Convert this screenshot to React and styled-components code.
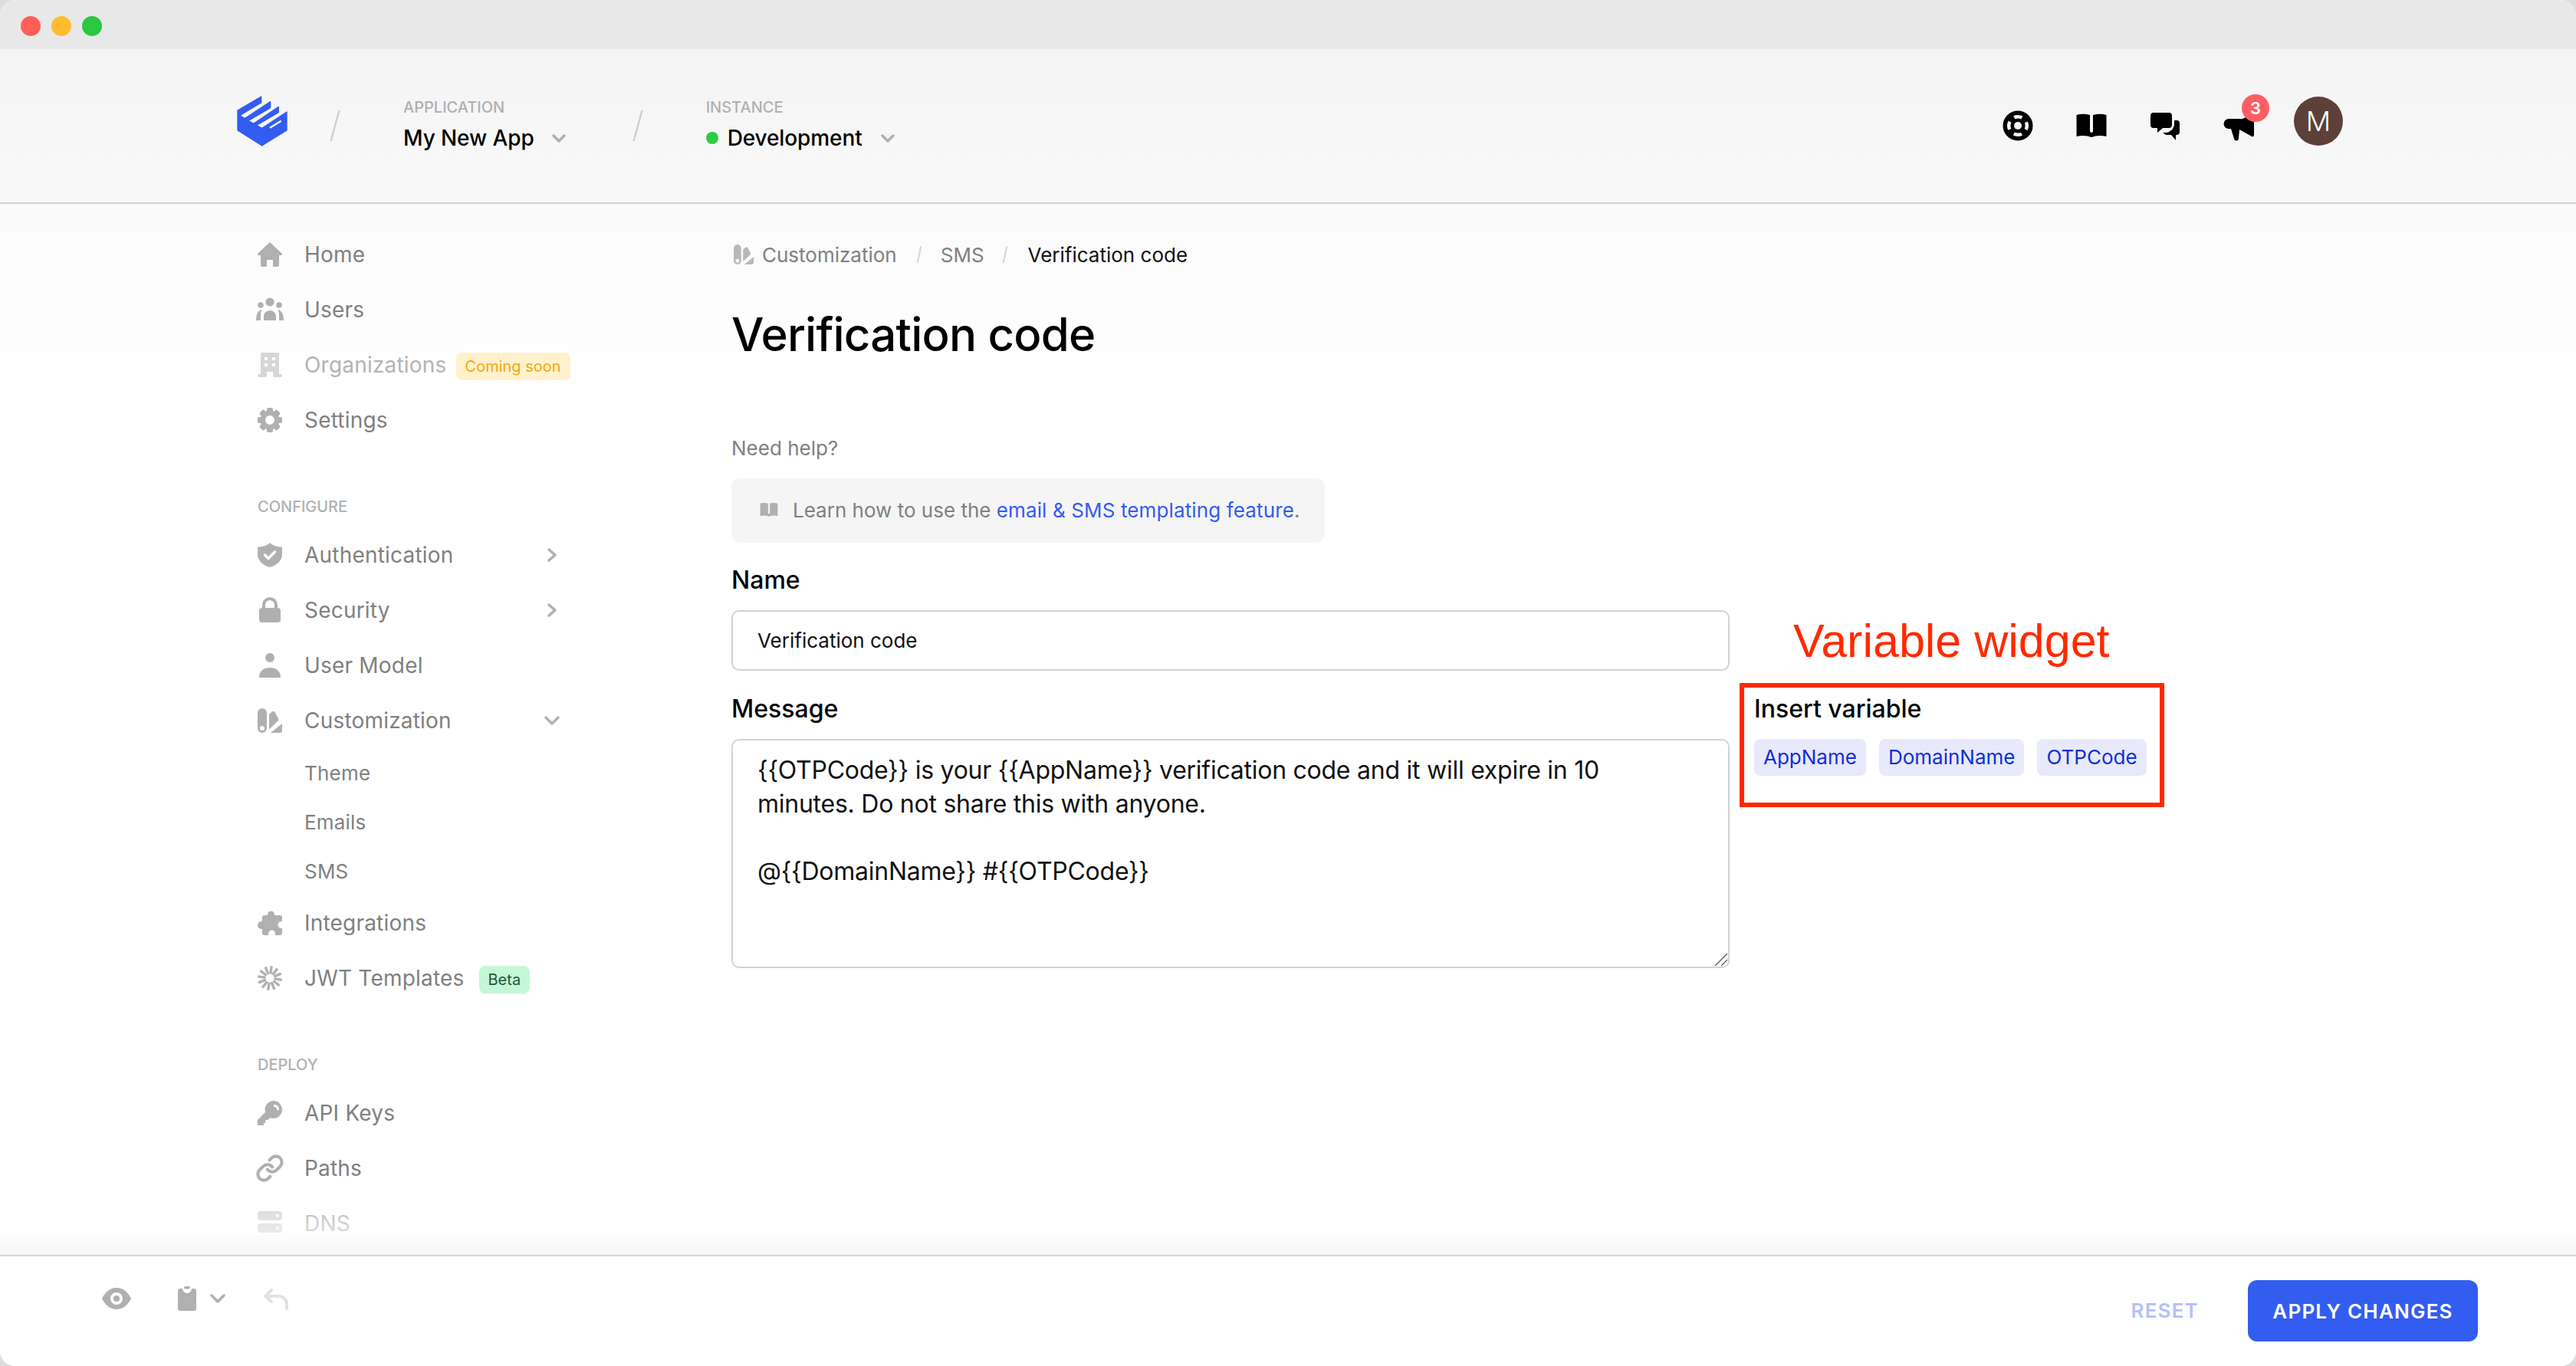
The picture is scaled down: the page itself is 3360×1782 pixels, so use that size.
import React from 'react';
import styled, { createGlobalStyle } from 'styled-components';
import { Link as LinkIcon } from 'lucide-react';

const Global = createGlobalStyle`
  html, body { margin: 0; padding: 0; background: #dcdcdc; }
  body { font-family: Inter, "Liberation Sans", sans-serif; -webkit-font-smoothing: antialiased; }
  * { box-sizing: border-box; }
`;

const Window = styled.div`
  width: 3360px; height: 1782px; display: flex; flex-direction: column; overflow: hidden;
  border-radius: 20px; background: #fff;
`;
const TitleBar = styled.div`
  height: 64px; background: #e8e8e8; display: flex; align-items: center; gap: 14px; padding: 4px 0 0 27px; flex: none;
`;
const Light = styled.span`
  width: 26px; height: 26px; border-radius: 50%; background: ${p => p.$c};
`;
const Header = styled.header`
  height: 202px; flex: none; display: flex; align-items: flex-start; padding: 56px 304px 0 300px;
  background: linear-gradient(#f4f4f4, #f9f9f9); border-bottom: 2px solid #d2d2d2;
`;
const Slash = styled.svg`
  width: 14px; height: 42px; flex: none; margin: 23px 82px 0 ${p => p.$ml}px;
`;
const Picker = styled.div`
  display: flex; flex-direction: column; padding-top: 8px;
`;
const PickerLabel = styled.div`
  font-size: 20px; line-height: 24px; font-weight: 500; color: #b0b0b0;
`;
const PickerValue = styled.div`
  margin-top: 8px; height: 40px; display: flex; align-items: center; font-size: 28px; font-weight: 500; letter-spacing: -.1px; color: #000;
`;
const Dot = styled.span`
  width: 16px; height: 16px; border-radius: 50%; background: #2ecc40; margin-right: 12px;
`;
const Caret = styled.svg`
  width: 20px; height: 12px; margin-left: ${p => p.$ml}px; fill: none; stroke: #b0b0b0; stroke-width: 3.5; stroke-linecap: round; stroke-linejoin: round;
`;
const Tools = styled.div`
  margin-left: auto; display: flex; align-items: flex-start; gap: 48px;
`;
const Tool = styled.div`
  position: relative; width: 48px; height: 48px; margin-top: 20px;
  svg { display: block; width: 48px; height: 48px; }
`;
const CountBadge = styled.span`
  position: absolute; left: 28px; top: -17px; width: 36px; height: 36px; border-radius: 50%;
  background: #ff5d63; color: #fff; font-size: 22px; font-weight: 600; display: flex; align-items: center; justify-content: center;
`;
const Avatar = styled.div`
  width: 64px; height: 64px; margin-top: 6px; border-radius: 50%; background: #5d4037; color: #fff;
  display: flex; align-items: center; justify-content: center; font-size: 36px; font-weight: 300;
`;

const Body = styled.div`
  position: relative; flex: 1; min-height: 0; overflow: hidden; display: flex;
  background: linear-gradient(#fafafa, #fff 240px);
`;
const BottomFade = styled.div`
  position: absolute; left: 0; right: 0; bottom: 0; height: 76px; pointer-events: none;
  background: linear-gradient(rgba(255,255,255,0), rgba(255,255,255,.45) 55%, #f6f6f6);
`;
const Sidebar = styled.nav`
  width: 618px; margin-left: 336px; padding-top: 30px; flex: none;
`;
const NavItem = styled.div`
  height: 72px; width: 394px; display: flex; align-items: center; font-size: 28px; letter-spacing: .2px; white-space: nowrap;
  color: ${p => p.$off ? '#b4b4b4' : '#808080'};
  svg.ico { width: 32px; height: 32px; flex: none; margin-right: 29px; fill: ${p => p.$off ? '#d6d6d6' : '#b0b0b0'}; overflow: visible; }
`;
const SubItem = styled.div`
  height: 64px; padding-left: 61px; display: flex; align-items: center; font-size: 26px; letter-spacing: .2px; color: #808080;
`;
const SectionLabel = styled.div`
  margin-top: 50px; height: 54px; display: flex; align-items: center; font-size: 20px; font-weight: 500; color: #b0b0b0;
`;
const NavArrow = styled.svg`
  margin: 0 ${p => p.$mr}px 0 auto; width: ${p => p.$w}px; height: ${p => p.$h}px; fill: none; stroke: #b0b0b0; stroke-width: 3.5; stroke-linecap: round; stroke-linejoin: round;
`;
const Pill = styled.span`
  margin-left: ${p => p.$ml}px; height: 36px; padding: 0 12px; border-radius: 8px; display: inline-flex; align-items: center; flex: none;
  font-size: 20px; letter-spacing: 0; white-space: nowrap; background: ${p => p.$bg}; color: ${p => p.$fg};
  position: relative; top: 2px;
`;

const Main = styled.main`
  padding-top: 46px; width: 1880px;
`;
const Crumbs = styled.div`
  height: 40px; display: flex; align-items: center; font-size: 26px; color: #808080;
`;
const CrumbIcon = styled.svg`
  width: 26px; height: 26px; margin: 0 11px 0 3px; fill: #b8b8b8;
`;
const CrumbSep = styled.span`
  width: 2px; height: 22px; margin: 0 ${p => p.$r}px 0 ${p => p.$l}px; background: #d4d4d4; transform: rotate(12deg);
`;
const CrumbNow = styled.span`
  color: #111;
`;
const Title = styled.h1`
  margin: 44px 0 0; font-size: 60px; line-height: 80px; font-weight: 500; color: #000; letter-spacing: -.8px;
`;
const Hint = styled.div`
  margin-top: 91px; font-size: 26px; line-height: 36px; color: #808080;
`;
const HelpBox = styled.div`
  margin-top: 21px; width: 774px; height: 84px; border-radius: 12px; background: #f5f5f5; display: flex; align-items: center;
  padding: 0 0 2px 35px; font-size: 26px; color: #808080; white-space: nowrap;
`;
const HelpIcon = styled.svg`
  width: 28px; height: 28px; margin-right: 17px; fill: #b0b0b0; flex: none;
`;
const HelpLink = styled.span`
  color: #335bf1; margin-left: .28em; letter-spacing: .13px;
`;
const FormGrid = styled.div`
  margin-top: 29px; display: grid; grid-template-columns: 1302px 1fr; row-gap: 30px;
`;
const Field = styled.div`
  display: flex; flex-direction: column;
`;
const FieldLabel = styled.div`
  font-size: 32px; line-height: 40px; font-weight: 500; color: #000; margin-bottom: 19px;
`;
const TextInput = styled.input`
  height: 79px; border: 2px solid #d2d2d2; border-radius: 10px; background: #fff; padding: 0 32px; font: 400 26px Inter, sans-serif; color: #111; outline: none;
`;
const AreaWrap = styled.div`
  position: relative; display: flex;
`;
const TextArea = styled.textarea`
  flex: 1; height: 299px; border: 2px solid #d2d2d2; border-radius: 10px; background: #fff; padding: 17px 100px 0 32px; font: 400 32px/44px Inter, sans-serif; letter-spacing: -.25px; color: #111; outline: none; resize: none;
`;
const Grip = styled.svg`
  position: absolute; right: 2px; bottom: 2px; width: 18px; height: 18px; fill: none; stroke: #555; stroke-width: 1.2;
`;
const Widget = styled.div`
  position: relative; padding-left: 32px;
`;
const AnnotationBox = styled.div`
  position: absolute; left: 13px; top: -14px; width: 554px; height: 162px; border: 6px solid #ff2a00; pointer-events: none;
`;
const AnnotationTitle = styled.div`
  position: absolute; left: 83px; top: -104px; font-family: "Liberation Sans", Arial, sans-serif; font-size: 61px; line-height: 70px; color: #ff2a00; white-space: nowrap;
`;
const Chips = styled.div`
  display: flex; gap: 17px;
`;
const Chip = styled.span`
  height: 48px; padding: 0 12px 2px; border-radius: 8px; background: #e8e9fb; color: #0d2fd9; font-size: 26px; display: flex; align-items: center;
`;

const Footer = styled.footer`
  height: 145px; flex: none; border-top: 2px solid #d6d6d6; background: #fff; display: flex; padding: 31px 128px 0 133px; 
`;
const FootIcon = styled.svg`
  width: ${p => p.$w}px; height: ${p => p.$h}px; margin: ${p => p.$t}px ${p => p.$r}px 0 0; fill: ${p => p.$fill || '#b0b0b0'}; flex: none;
`;
const FootActions = styled.div`
  margin-left: auto; display: flex; align-items: center; align-self: flex-start; gap: 64px;
`;
const ResetBtn = styled.span`
  font-size: 26px; font-weight: 600; letter-spacing: 1.2px; color: #b3c0fa; position: relative; top: -1px;
`;
const ApplyBtn = styled.span`
  width: 300px; height: 80px; border-radius: 12px; background: #335df0; color: #fff; font-size: 26px; font-weight: 600; letter-spacing: 1.2px;
  display: flex; align-items: center; justify-content: center;
`;

const bookPath = 'M4.5 10 Q13 7.5 22 10 V31 a2 2 0 0 0 4 0 V10 Q35 7.5 43.5 10 V38 Q33 35.5 24 39 Q15 35.5 4.5 38 Z';
const SlashMark = ({ ml }) => (
  <Slash $ml={ml} viewBox="0 0 14 42"><path d="M12.5 1 L1.5 41" stroke="#cfcfcf" strokeWidth="2.5" /></Slash>
);
const ChevDown = ({ ml }) => <Caret $ml={ml} viewBox="0 0 20 12"><path d="M3 3 L10 10 L17 3" /></Caret>;
const Swatch = () => (
  <>
    <path fillRule="evenodd" d="M6 0 a6 6 0 0 1 6 6 V26 a6 6 0 0 1 -12 0 V6 a6 6 0 0 1 6-6z M6 23 a3 3 0 1 0 0 6 a3 3 0 0 0 0-6z" />
    <path d="M15 8 L19 4.500 Q21 3 22.500 5 L27 13.500 Q28 15.500 26 17 L15 27.500 Z" />
    <path d="M17 32 L32 20 V29 a3 3 0 0 1-3 3 Z" />
  </>
);

const icons = {
  home: <path d="M16 0 L31 14 Q33 16 31 17 H28 V30 a2 2 0 0 1-2 2 H20 V23 H12 V32 H6 a2 2 0 0 1-2-2 V17 H1 Q-1 16 1 14 Z" />,
  users: (
    <g transform="translate(-2 0)">
      <circle cx="18" cy="6" r="5.6" /><circle cx="6" cy="10" r="3.8" /><circle cx="30" cy="10" r="3.8" />
      <path d="M10 30 V25 a8 8 0 0 1 16 0 V30 Z" />
      <path d="M0 30 C0 23 2 17 7.5 16 C5.5 20 6 25 6 30 Z" /><path d="M36 30 C36 23 34 17 28.5 16 C30.500 20 30 25 30 30 Z" />
    </g>
  ),
  org: (
    <path fillRule="evenodd" d="M6 0 H26 a2 2 0 0 1 2 2 V28 H30 a1.500 1.500 0 0 1 0 4 H22 a2 2 0 0 1-2-2 V25 H12 V30 a2 2 0 0 1-2 2 H2 a1.500 1.500 0 0 1 0-4 H4 V2 a2 2 0 0 1 2-2z M9 6 V10 H13 V6z M19 6 V10 H23 V6z M9 14 V18 H13 V14z M19 14 V18 H23 V14z" />
  ),
  gear: (
    <g>
      {[0, 45, 90, 135, 180, 225, 270, 315].map(a => <rect key={a} x="12" y="0" width="8" height="8" rx="2" transform={`rotate(${a} 16 16)`} />)}
      <path fillRule="evenodd" d="M16 3.500 a12.500 12.500 0 1 0 0 25 a12.500 12.500 0 0 0 0-25z M16 10 a6 6 0 1 1 0 12 a6 6 0 0 1 0-12z" />
    </g>
  ),
  shield: (
    <g>
      <path d="M16 0 C20 4 26 5.500 32 5.500 V15 C32 24 24 30 16 32 C8 30 0 24 0 15 V5.500 C6 5.500 12 4 16 0Z" />
      <path d="M9.500 16 L14 20.500 L22.500 12" fill="none" stroke="#fff" strokeWidth="3.500" strokeLinecap="round" strokeLinejoin="round" />
    </g>
  ),
  lock: (
    <g>
      <rect x="2" y="13" width="28" height="19" rx="4" />
      <path d="M8 15 V9 a8 8 0 0 1 16 0 V15" fill="none" stroke="#b0b0b0" strokeWidth="4" />
    </g>
  ),
  user: (
    <g><circle cx="16" cy="6" r="6" /><path d="M2 32 C2 23 8 19 16 19 S30 23 30 32 Z" /></g>
  ),
  swatch: <Swatch />,
  puzzle: <path d="M9 6 H13 V5 a4.500 4.500 0 0 1 9 0 V6 H29 a3 3 0 0 1 3 3 V14 H31 a4 4 0 0 0 0 9 H32 V29 a3 3 0 0 1-3 3 H23 V30 a4.500 4.500 0 0 0-9 0 V32 H9 a3 3 0 0 1-3-3 V24 H5 a5 5 0 0 1 0-10 H6 V9 a3 3 0 0 1 3-3z" />,
  spark: (
    <g>
      {[0, 30, 60, 90, 120, 150, 180, 210, 240, 270, 300, 330].map(a => (
        <rect key={a} x="14.300" y="0" width="3.400" height="10.500" rx="1" transform={`rotate(${a + 8} 16 16)`} />
      ))}
    </g>
  ),
  key: (
    <path fillRule="evenodd" d="M20.500 0 a11.500 11.500 0 1 1 -4 22.300 L13 25 H10 V29 H8 V32 H0 V25 L10 15 A11.500 11.500 0 0 1 20.500 0z M22 5 a1.500 1.500 0 0 0 0 3 a3 3 0 0 1 3 3 a1.500 1.500 0 0 0 3 0 a6 6 0 0 0-6-6z" />
  ),
  server: (
    <path fillRule="evenodd" d="M4 0 H28 a4 4 0 0 1 4 4 V8 a4 4 0 0 1-4 4 H4 a4 4 0 0 1-4-4 V4 a4 4 0 0 1 4-4z M26 4 a2 2 0 1 0 0 4 a2 2 0 0 0 0-4z M4 16 H28 a4 4 0 0 1 4 4 V24 a4 4 0 0 1-4 4 H4 a4 4 0 0 1-4-4 V20 a4 4 0 0 1 4-4z M26 20 a2 2 0 1 0 0 4 a2 2 0 0 0 0-4z" />
  ),
};

const Ico = ({ name }) => <svg className="ico" viewBox="0 0 32 32">{icons[name]}</svg>;
const ArrowRight = () => <NavArrow $w={14} $h={20} $mr={3} viewBox="0 0 14 20"><path d="M3 3 L11 10 L3 17" /></NavArrow>;
const ArrowDown = () => <NavArrow $w={20} $h={14} $mr={0} viewBox="0 0 20 14"><path d="M2 3 L10 11 L18 3" /></NavArrow>;

export default function App() {
  return (
    <Window>
      <Global />
      <TitleBar>
        <Light $c="#ff5f57" /><Light $c="#febc2e" /><Light $c="#28c840" />
      </TitleBar>
      <Header>
        <svg width="84" height="76" viewBox="0 0 252 228" style={{ flex: 'none' }}>
          <path fill="#335df0" stroke="#335df0" strokeWidth="4" strokeLinejoin="round" d="M30 72 L122 18 V42 L38 92 L58 104 L158 38 V62 L72 112 L92 124 L190 58 V80 L104 130 L125 142 L222 78 V150 L125 210 L30 150 Z" />
          <path d="M156 140 L200 113" stroke="#f6f6f6" strokeWidth="7" />
        </svg>
        <SlashMark ml={46} />
        <Picker>
          <PickerLabel>APPLICATION</PickerLabel>
          <PickerValue>My New App<ChevDown ml={22} /></PickerValue>
        </Picker>
        <SlashMark ml={86} />
        <Picker>
          <PickerLabel>INSTANCE</PickerLabel>
          <PickerValue><Dot />Development<ChevDown ml={23} /></PickerValue>
        </Picker>
        <Tools>
          <Tool>
            <svg viewBox="0 0 48 48">
              <circle cx="24" cy="24" r="19.500" fill="#000" />
              <circle cx="24" cy="24" r="5" fill="#f5f5f5" />
              <circle cx="24" cy="24" r="11.800" fill="none" stroke="#f5f5f5" strokeWidth="4.500" strokeDasharray="10.500 8.030" strokeDashoffset="-13.300" />
            </svg>
          </Tool>
          <Tool>
            <svg viewBox="0 0 48 48"><path d={bookPath} fill="#000" /></svg>
          </Tool>
          <Tool>
            <svg viewBox="0 0 48 48">
              <path d="M9 7 H29 a4 4 0 0 1 4 4 V23 a4 4 0 0 1-4 4 H21 L14 33 V27 H9 a4 4 0 0 1-4-4 V11 a4 4 0 0 1 4-4z" fill="#000" />
              <path d="M36 17 H39 a4 4 0 0 1 4 4 V32 a4 4 0 0 1-4 4 H38 V43 L32 36 H25 L21 33 H26 C32 32 36 27 36 21 Z" fill="#000" />
            </svg>
          </Tool>
          <Tool>
            <svg viewBox="0 0 48 48">
              <path d="M11 15 H29 L44 8 V36 a2 2 0 0 1-3 2 L25 29 L24 40 a3 3 0 0 1-6 1 L14 28 H11 a6.500 6.500 0 0 1 0-13z" fill="#000" />
            </svg>
            <CountBadge>3</CountBadge>
          </Tool>
          <Avatar>M</Avatar>
        </Tools>
      </Header>
      <Body>
        <Sidebar>
          <NavItem><Ico name="home" />Home</NavItem>
          <NavItem><Ico name="users" />Users</NavItem>
          <NavItem $off><Ico name="org" />Organizations<Pill $ml={12} $bg="#fff1cc" $fg="#f5a80a">Coming soon</Pill></NavItem>
          <NavItem><Ico name="gear" />Settings</NavItem>
          <SectionLabel>CONFIGURE</SectionLabel>
          <NavItem><Ico name="shield" />Authentication<ArrowRight /></NavItem>
          <NavItem><Ico name="lock" />Security<ArrowRight /></NavItem>
          <NavItem><Ico name="user" />User Model</NavItem>
          <NavItem><Ico name="swatch" />Customization<ArrowDown /></NavItem>
          <SubItem>Theme</SubItem>
          <SubItem>Emails</SubItem>
          <SubItem>SMS</SubItem>
          <NavItem><Ico name="puzzle" />Integrations</NavItem>
          <NavItem><Ico name="spark" />JWT Templates<Pill $ml={19} $bg="#c4f7d6" $fg="#1f5a3c">Beta</Pill></NavItem>
          <SectionLabel>DEPLOY</SectionLabel>
          <NavItem><Ico name="key" />API Keys</NavItem>
          <NavItem>
            <LinkIcon className="ico" size={32} strokeWidth={2.6} color="#b0b0b0" style={{ fill: 'none', transform: 'scale(1.18)' }} />
            Paths
          </NavItem>
          <NavItem $off><Ico name="server" />DNS</NavItem>
        </Sidebar>
        <Main>
          <Crumbs>
            <CrumbIcon viewBox="0 0 32 32"><Swatch /></CrumbIcon>
            Customization
            <CrumbSep $l={28} $r={27} />
            SMS
            <CrumbSep $l={26} $r={29} />
            <CrumbNow>Verification code</CrumbNow>
          </Crumbs>
          <Title>Verification code</Title>
          <Hint>Need help?</Hint>
          <HelpBox>
            <HelpIcon viewBox="0 0 48 48"><path d={bookPath} /></HelpIcon>
            Learn how to use the<HelpLink>email &amp; SMS templating feature</HelpLink>.
          </HelpBox>
          <FormGrid>
            <Field>
              <FieldLabel>Name</FieldLabel>
              <TextInput defaultValue="Verification code" />
            </Field>
            <div />
            <Field>
              <FieldLabel>Message</FieldLabel>
              <AreaWrap>
                <TextArea defaultValue={'{{OTPCode}} is your {{AppName}} verification code and it will expire in 10 minutes. Do not share this with anyone.\n\n@{{DomainName}} #{{OTPCode}}'} />
                <Grip viewBox="0 0 18 18"><path d="M17 1 L1 17 M17 9 L9 17" /></Grip>
              </AreaWrap>
            </Field>
            <Widget>
              <AnnotationTitle>Variable widget</AnnotationTitle>
              <AnnotationBox />
              <FieldLabel>Insert variable</FieldLabel>
              <Chips>
                <Chip>AppName</Chip>
                <Chip>DomainName</Chip>
                <Chip>OTPCode</Chip>
              </Chips>
            </Widget>
          </FormGrid>
        </Main>
        <BottomFade />
      </Body>
      <Footer>
        <FootIcon $w={38} $h={28} $t={10} $r={61} viewBox="0 0 38 28">
          <path fillRule="evenodd" d="M19 0 C28 0 34 6 38 14 C34 22 28 28 19 28 C10 28 4 22 0 14 C4 6 10 0 19 0z M19 6 a8 8 0 1 0 0 16 a8 8 0 0 0 0-16z M19 10 a4 4 0 1 1 0 8 a4 4 0 0 1 0-8z" />
        </FootIcon>
        <FootIcon $w={24} $h={32} $t={8} $r={18} viewBox="0 0 24 32">
          <path d="M3 3 H6 a6 6 0 0 0 12 0 H21 a3 3 0 0 1 3 3 V29 a3 3 0 0 1-3 3 H3 a3 3 0 0 1-3-3 V6 a3 3 0 0 1 3-3z" />
          <rect x="8" y="0" width="8" height="3.500" rx="1.700" />
        </FootIcon>
        <FootIcon $w={20} $h={12} $t={18} $r={50} viewBox="0 0 20 12" style={{ fill: 'none', stroke: '#b0b0b0', strokeWidth: 3.5, strokeLinecap: 'round', strokeLinejoin: 'round' }}>
          <path d="M2 2 L10 10 L18 2" />
        </FootIcon>
        <FootIcon $w={32} $h={28} $t={11} $r={0} viewBox="0 0 32 28" style={{ fill: 'none', stroke: '#e2e2e2', strokeWidth: 4, strokeLinecap: 'round', strokeLinejoin: 'round' }}>
          <path d="M10 2 L2 10 L10 17 M2 10 H20 a10 10 0 0 1 10 10 V26" />
        </FootIcon>
        <FootActions>
          <ResetBtn>RESET</ResetBtn>
          <ApplyBtn>APPLY CHANGES</ApplyBtn>
        </FootActions>
      </Footer>
    </Window>
  );
}
